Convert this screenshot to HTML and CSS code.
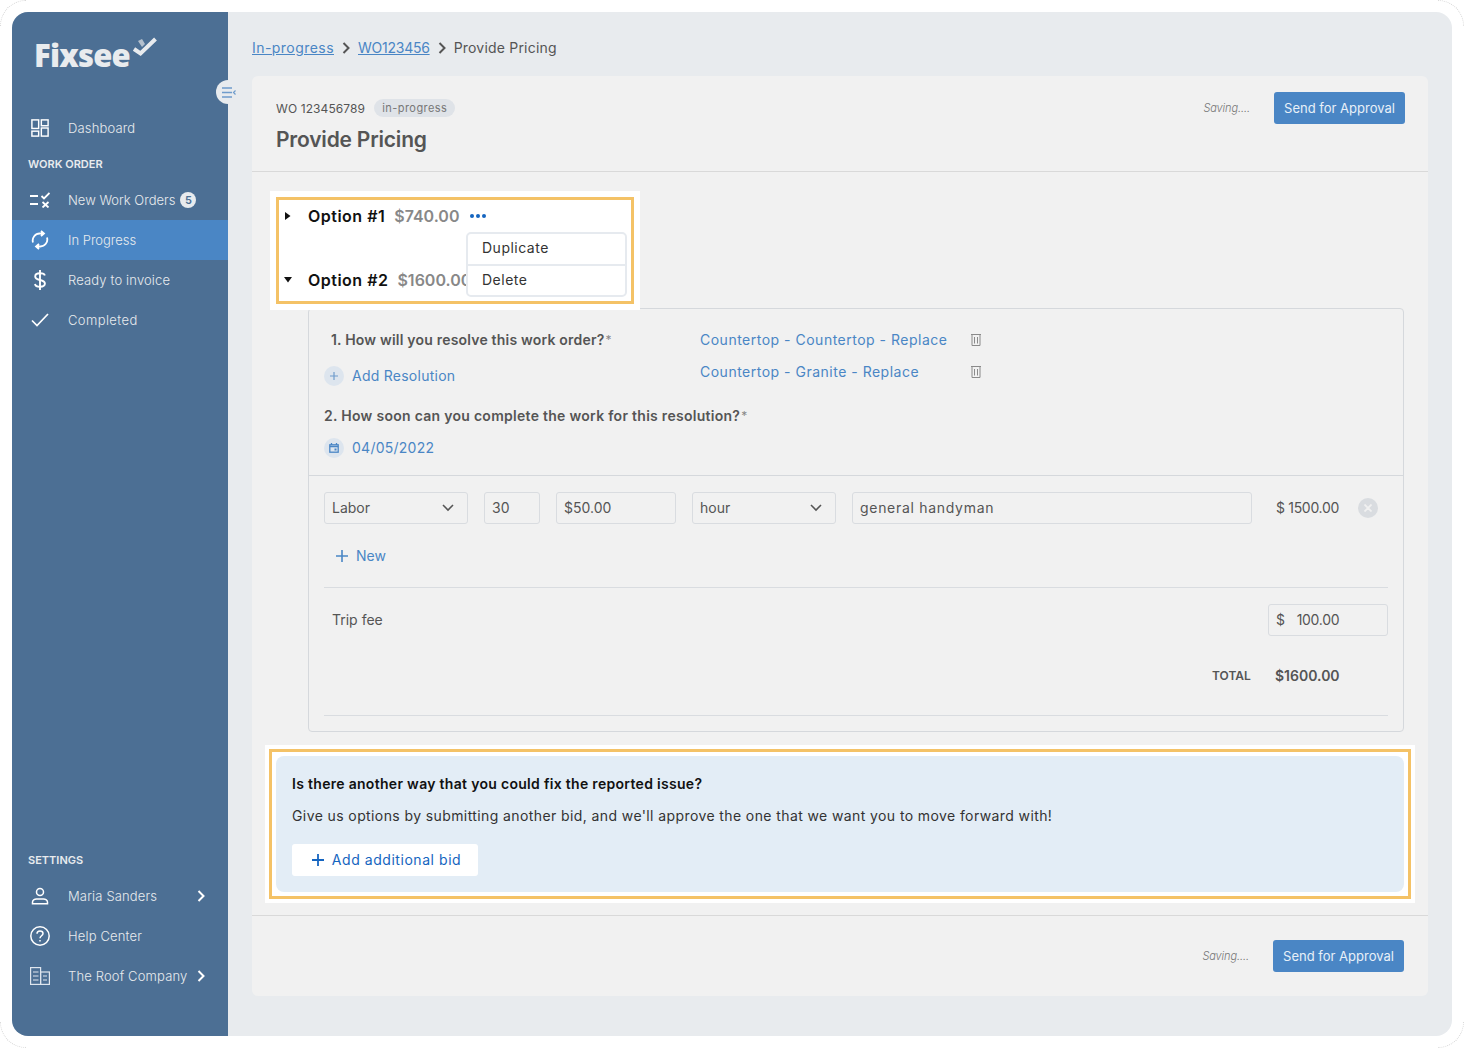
FILE: index.html
```html
<!DOCTYPE html>
<html lang="en">
<head>
    <meta charset="UTF-8">
    <link rel="stylesheet" href="styles.css">
    <title>Provide Pricing</title>
</head>
<body>
    <span class="corner corner-tl"></span>
    <span class="corner corner-tr"></span>
    <span class="corner corner-bl"></span>
    <span class="corner corner-br"></span>

    <div class="app">
        <aside class="sidebar">
            <div class="logo">
                <span class="logo-text">Fixsee</span>
                <svg class="logo-check" width="26" height="22" viewBox="0 0 26 22" fill="none"><path d="M6 5l4-2 3 5-3 3z" fill="#b4c0cd"/><path d="M2 13l6.500 4.500L23.500 3" stroke="#e8ebee" stroke-width="4"/></svg>
            </div>
            <button class="collapse">
                <svg width="14" height="11" viewBox="0 0 14 11" fill="none" stroke="#6f9ccc" stroke-width="1.700"><path d="M0 1h10M0 5.500h10M0 10h10"/><path d="M13.500 3.500l-2 2 2 2" stroke-width="1.200"/></svg>
            </button>

            <a class="nav-item">
                <span class="nav-icon"><svg width="18" height="18" viewBox="0 0 20 20" fill="none" stroke="#fff" stroke-width="1.600"><rect x="1" y="1" width="7.500" height="9.500"/><rect x="11.500" y="1" width="7.500" height="6.500"/><rect x="1" y="13.500" width="7.500" height="5.500"/><rect x="11.500" y="10" width="7.500" height="9"/></svg></span>
                <span>Dashboard</span>
            </a>
            <h4 class="nav-heading">WORK ORDER</h4>
            <a class="nav-item">
                <span class="nav-icon"><svg width="20" height="16" viewBox="0 0 20 16" fill="none" stroke="#fff" stroke-width="1.800"><path d="M0 4h8M0 12h8"/><path d="M11.500 4l2.500 2.500L19.500 1"/><path d="M12.500 10l6 5.500M18.500 10l-6 5.500"/></svg></span>
                <span class="tight">New Work Orders</span><span class="count">5</span>
            </a>
            <a class="nav-item active">
                <span class="nav-icon"><svg width="18" height="20" viewBox="0 0 18 20" fill="none" stroke="#fff" stroke-width="1.800"><path d="M2 12.500A7 7 0 0 1 9 3.500h3"/><path d="M10 .8L13 3.500 10 6.200" fill="#fff"/><path d="M16 7.500A7 7 0 0 1 9 16.500H6"/><path d="M8 13.800L5 16.500 8 19.200" fill="#fff"/></svg></span>
                <span class="tight">In Progress</span>
            </a>
            <a class="nav-item">
                <span class="nav-icon"><svg width="12" height="20" viewBox="0 0 12 20" fill="none" stroke="#fff" stroke-width="1.900"><path d="M6 0v20"/><path d="M10.800 5.500C10.500 4 9 3.300 6 3.300S1.200 4.600 1.200 6.500 3 9.300 6 10s4.900 1.600 4.900 3.600S9 16.800 6 16.800 1.300 15.800 1 14"/></svg></span>
                <span>Ready to invoice</span>
            </a>
            <a class="nav-item">
                <span class="nav-icon"><svg width="18" height="14" viewBox="0 0 18 14" fill="none" stroke="#fff" stroke-width="1.700"><path d="M1 7.500L6 12.500 17 1"/></svg></span>
                <span class="wide">Completed</span>
            </a>

            <h4 class="nav-heading settings">SETTINGS</h4>
            <a class="nav-item">
                <span class="nav-icon"><svg width="18" height="18" viewBox="0 0 18 18" fill="none" stroke="#fff" stroke-width="1.500"><circle cx="9" cy="5" r="3.500"/><path d="M1.500 16.800v-1.500c0-2 2-3.300 4-3.300h7c2 0 4 1.300 4 3.300v1.500z"/></svg></span>
                <span class="grow">Maria Sanders</span>
                <svg class="chev" width="8" height="12" viewBox="0 0 8 12" fill="none" stroke="#fff" stroke-width="2"><path d="M1.500 1l5 5-5 5"/></svg>
            </a>
            <a class="nav-item">
                <span class="nav-icon"><svg width="20" height="20" viewBox="0 0 20 20" fill="none" stroke="#fff" stroke-width="1.500"><circle cx="10" cy="10" r="9.200"/><path d="M7 7.800C7 6 8.300 5 10 5s3 1 3 2.500c0 2.300-3 2.300-3 4.800"/><path d="M10 14v1.600"/></svg></span>
                <span>Help Center</span>
            </a>
            <a class="nav-item">
                <span class="nav-icon"><svg width="20" height="18" viewBox="0 0 20 18" fill="none" stroke="#dfe6ee" stroke-width="1.200"><rect x=".6" y=".6" width="10" height="16.800"/><rect x="10.600" y="5" width="8.800" height="12.400"/><path d="M3 5h5.500M3 9h5.500M3 13h5.500M13 9h4M13 13h4"/></svg></span>
                <span class="grow">The Roof Company</span>
                <svg class="chev" width="8" height="12" viewBox="0 0 8 12" fill="none" stroke="#fff" stroke-width="2"><path d="M1.500 1l5 5-5 5"/></svg>
            </a>
        </aside>

        <main class="main">
            <nav class="crumbs">
                <a class="crumb-first">In-progress</a>
                <svg width="8" height="12" viewBox="0 0 8 12" fill="none" stroke="#555" stroke-width="2"><path d="M1.500 1l5 5-5 5"/></svg>
                <a class="crumb-wo">WO123456</a>
                <svg width="8" height="12" viewBox="0 0 8 12" fill="none" stroke="#555" stroke-width="2"><path d="M1.500 1l5 5-5 5"/></svg>
                <span class="crumb-last">Provide Pricing</span>
            </nav>

            <section class="card">
                <header class="card-head">
                    <div>
                        <div class="wo-line"><span>WO 123456789</span><span class="pill">in-progress</span></div>
                        <h1>Provide Pricing</h1>
                    </div>
                    <div class="actions">
                        <em>Saving....</em>
                        <button class="btn-primary">Send for Approval</button>
                    </div>
                </header>

                <div class="card-body">
                    <div class="options-frame">
                        <div class="options">
                            <div class="option">
                                <svg class="caret" width="6" height="8" viewBox="0 0 6 8"><path d="M0 0l5.500 4L0 8z"/></svg>
                                <strong>Option #1</strong>
                                <b>$740.00</b>
                                <span class="dots"><i></i><i></i><i></i></span>
                            </div>
                            <div class="option two">
                                <svg class="caret" width="8" height="6" viewBox="0 0 8 6"><path d="M0 0h8L4 5.500z"/></svg>
                                <strong>Option #2</strong>
                                <b>$1600.00</b>
                            </div>
                            <ul class="menu">
                                <li>Duplicate</li>
                                <li>Delete</li>
                            </ul>
                        </div>
                    </div>

                    <div class="bid">
                        <div class="resolve">
                            <div class="resolve-left">
                                <h3 class="q-first">1. How will you resolve this work order?<sup>*</sup></h3>
                                <a class="add-link">
                                    <span class="round-icon"><svg width="8" height="8" viewBox="0 0 8 8" stroke="#6f9ccc" stroke-width="1.200"><path d="M4 0v8M0 4h8"/></svg></span>
                                    Add Resolution
                                </a>
                            </div>
                            <ul class="resolutions">
                                <li><a>Countertop - Countertop - Replace</a>
                                    <svg width="10" height="12" viewBox="0 0 10 12" fill="none" stroke="#8a8a8a"><path d="M0 .5h10M1 .5v11h8V.5M3.500 3v6.500M6.500 3v6.500"/></svg></li>
                                <li><a>Countertop - Granite - Replace</a>
                                    <svg width="10" height="12" viewBox="0 0 10 12" fill="none" stroke="#8a8a8a"><path d="M0 .5h10M1 .5v11h8V.5M3.500 3v6.500M6.500 3v6.500"/></svg></li>
                            </ul>
                        </div>
                        <h3 class="q-second">2. How soon can you complete the work for this resolution?<sup>*</sup></h3>
                        <a class="add-link date">
                            <span class="round-icon"><svg width="10" height="10" viewBox="0 0 10 10" fill="none" stroke="#4a86c5" stroke-width="1.300"><rect x=".8" y="1.800" width="8.400" height="7.400"/><path d="M.8 3.500h8.400M2.500 0v2M7.500 0v2"/><path d="M5.500 5.500h2v2h-2z" fill="#4a86c5" stroke="none"/></svg></span>
                            04/05/2022
                        </a>

                        <div class="lines">
                            <div class="line-row">
                                <div class="field w-labor">Labor<svg width="12" height="8" viewBox="0 0 12 8" fill="none" stroke="#555" stroke-width="1.600"><path d="M1 1l5 5 5-5"/></svg></div>
                                <div class="field w-qty">30</div>
                                <div class="field w-rate">$50.00</div>
                                <div class="field w-labor">hour<svg width="12" height="8" viewBox="0 0 12 8" fill="none" stroke="#555" stroke-width="1.600"><path d="M1 1l5 5 5-5"/></svg></div>
                                <div class="field w-desc">general handyman</div>
                                <span class="line-total">$ 1500.00</span>
                                <span class="remove"><svg width="8" height="8" viewBox="0 0 8 8" stroke="#f1f1f1" stroke-width="1.800"><path d="M.5.5l7 7M7.500.5l-7 7"/></svg></span>
                            </div>
                            <a class="new-link">
                                <svg width="12" height="12" viewBox="0 0 12 12" stroke="#4a86c5" stroke-width="1.600"><path d="M6 0v12M0 6h12"/></svg>
                                New
                            </a>
                            <div class="trip">
                                <span>Trip fee</span>
                                <div class="field w-trip"><span>$</span><span>100.00</span></div>
                            </div>
                            <div class="total"><small>TOTAL</small><b>$1600.00</b></div>
                        </div>
                    </div>

                    <div class="another-frame">
                        <div class="another">
                            <div class="another-inner">
                                <h3>Is there another way that you could fix the reported issue?</h3>
                                <p>Give us options by submitting another bid, and we'll approve the one that we want you to move forward with!</p>
                                <button class="btn-add">
                                    <svg width="12" height="12" viewBox="0 0 12 12" stroke="#1565c0" stroke-width="1.800"><path d="M6 0v12M0 6h12"/></svg>
                                    Add additional bid
                                </button>
                            </div>
                        </div>
                    </div>
                </div>

                <footer class="card-foot">
                    <em>Saving....</em>
                    <button class="btn-primary">Send for Approval</button>
                </footer>
            </section>
        </main>
    </div>
</body>
</html>
```

FILE: styles.css
```css
* {
    box-sizing: border-box;
}

html, body {
    margin: 0;
    height: 1048px;
    overflow: hidden;
}

body {
    position: relative;
    background: #fff;
    font-family: Inter, "Noto Sans", sans-serif;
    font-size: 14px;
    color: #555;
}

h1, h3, h4, p, ul {
    margin: 0;
    padding: 0;
}

ul {
    list-style: none;
}

sup {
    margin-left: 1px;
    font-size: 12px;
    font-weight: 400;
    color: #888;
    line-height: 0;
    vertical-align: 1px;
}

/* faint arcs in the window corners */
.corner {
    position: absolute;
    width: 26px;
    height: 26px;
    border: 0 dotted #d8d8d8;
}

.corner-tl { left: 0; top: 0; border-top-width: 1px; border-left-width: 1px; border-top-left-radius: 26px; }
.corner-tr { right: 0; top: 0; border-top-width: 1px; border-right-width: 1px; border-top-right-radius: 26px; }
.corner-bl { left: 0; bottom: 0; border-bottom-width: 1px; border-left-width: 1px; border-bottom-left-radius: 26px; }
.corner-br { right: 0; bottom: 0; border-bottom-width: 1px; border-right-width: 1px; border-bottom-right-radius: 26px; }

.app {
    position: relative;
    display: flex;
    width: 1440px;
    height: 1024px;
    margin: 12px;
    border-radius: 16px;
    overflow: hidden;
    background: #e8ebee;
}

/* sidebar */
.sidebar {
    position: relative;
    display: flex;
    flex-direction: column;
    width: 216px;
    flex: none;
    padding: 96px 0 40px;
    background: #4c6f94;
    color: #e8ebee;
}

.logo {
    position: absolute;
    left: 22px;
    top: 23px;
    display: flex;
    align-items: flex-start;
}

.logo-text {
    font-family: "Open Sans", sans-serif;
    font-size: 31px;
    font-weight: 800;
    line-height: 40px;
    letter-spacing: -.8px;
    color: #e8ebee;
}

.logo-check {
    margin: 1px 0 0 2px;
}

.collapse {
    position: absolute;
    right: -12px;
    top: 68px;
    z-index: 2;
    display: flex;
    align-items: center;
    justify-content: center;
    width: 24px;
    height: 24px;
    padding: 0 0 0 1px;
    border: 0;
    border-radius: 50%;
    background: #e8ebee;
}

.nav-item {
    display: flex;
    align-items: center;
    height: 40px;
    padding: 0 23px 0 16px;
    font-size: 13px;
    font-weight: 300;
    letter-spacing: .15px;
    white-space: nowrap;
}

.tight {
    letter-spacing: 0;
}

.wide {
    letter-spacing: .4px;
}

.nav-icon {
    display: flex;
    align-items: center;
    justify-content: center;
    width: 24px;
    margin-right: 16px;
    flex: none;
}

.nav-item.active {
    background: #4a86c5;
}

.nav-heading {
    height: 32px;
    padding-left: 16px;
    font-size: 11px;
    font-weight: 600;
    line-height: 32px;
}

.nav-heading.settings {
    margin-top: auto;
}

.grow {
    flex: 1;
}

.count {
    display: flex;
    align-items: center;
    justify-content: center;
    width: 16px;
    height: 16px;
    margin-left: 5px;
    border-radius: 50%;
    background: #e8ebee;
    color: #4c6f94;
    font-size: 11px;
    font-weight: 600;
}

/* main */
.main {
    flex: 1;
    padding: 0 24px;
}

.crumbs {
    display: flex;
    align-items: center;
    gap: 8px;
    height: 64px;
    padding-top: 7px;
    color: #555;
}

.crumbs a {
    color: #4a86c5;
    text-decoration: underline;
}

.crumb-first {
    letter-spacing: .45px;
}

.crumb-wo {
    letter-spacing: -.25px;
}

.crumb-last {
    letter-spacing: .2px;
}

.card {
    height: 920px;
    border-radius: 6px;
    background: #f1f1f1;
}

.card-head {
    display: flex;
    justify-content: space-between;
    height: 96px;
    padding: 16px 23px 0 24px;
    border-bottom: 1px solid #d9d9d9;
}

.wo-line {
    display: flex;
    align-items: center;
    gap: 9px;
    height: 32px;
    font-size: 12px;
    letter-spacing: .1px;
}

.pill {
    padding: 0 8px;
    border-radius: 9px;
    background: #dfe3e8;
    color: #777;
    font-size: 11px;
    line-height: 18px;
    letter-spacing: .45px;
}

h1 {
    font-size: 21px;
    font-weight: 600;
    line-height: 32px;
    letter-spacing: -.2px;
    color: #555;
}

.actions {
    display: flex;
    align-items: flex-start;
    gap: 24px;
}

em {
    color: #777;
    font-size: 11px;
    font-weight: 300;
    line-height: 32px;
    letter-spacing: -.1px;
}

.btn-primary {
    width: 131px;
    height: 32px;
    padding: 0;
    border: 0;
    border-radius: 3px;
    background: #4a86c5;
    color: #e8f0f8;
    font: 13px Inter, sans-serif;
}

.card-body {
    height: 744px;
    padding-top: 19px;
    border-bottom: 1px solid #d9d9d9;
}

/* options with the yellow highlight */
.options-frame {
    position: relative;
    z-index: 1;
    width: 370px;
    height: 119px;
    margin-left: 18px;
    padding: 6px;
    background: #fff;
}

.options {
    position: relative;
    height: 107px;
    border: 3px solid #f4c266;
    color: #111;
}

.option {
    display: flex;
    align-items: center;
    height: 32px;
    font-size: 16px;
}

.option.two {
    margin-top: 32px;
}

.option strong {
    font-weight: 600;
    letter-spacing: .5px;
}

.option b {
    margin-left: 9px;
    color: #888;
    font-weight: 600;
}

.caret {
    width: 8px;
    margin: 0 16px 0 5px;
    fill: #111;
    flex: none;
}

.dots {
    display: flex;
    gap: 2px;
    margin-left: 11px;
}

.dots i {
    width: 4px;
    height: 4px;
    border-radius: 50%;
    background: #1565c0;
}

.menu {
    position: absolute;
    left: 187px;
    top: 32px;
    width: 161px;
    border: 2px solid #e6eaef;
    border-radius: 5px;
    background: #fff;
    color: #333;
    letter-spacing: .5px;
}

.menu li {
    height: 30px;
    padding-left: 14px;
    line-height: 28px;
}

.menu li + li {
    height: 31px;
    border-top: 2px solid #e6eaef;
}

/* bid */
.bid {
    position: relative;
    width: 1096px;
    height: 424px;
    margin: -2px 0 0 56px;
    padding: 0 0 0 15px;
    border: 1px solid #d5d8dc;
    border-radius: 4px;
}

.resolve {
    display: flex;
}

.resolve-left {
    width: 376px;
}

.bid h3 {
    font-size: 14px;
    font-weight: 600;
    color: #555;
}

.q-first {
    height: 32px;
    margin: 15px 0 0 7px;
    line-height: 32px;
    letter-spacing: .2px;
}

.q-second {
    height: 32px;
    margin-top: 4px;
    line-height: 32px;
    letter-spacing: .28px;
}

.add-link {
    display: flex;
    align-items: center;
    height: 40px;
    padding-bottom: 2px;
    color: #4a86c5;
    letter-spacing: .25px;
}

.add-link.date {
    height: 32px;
}

.round-icon {
    display: flex;
    align-items: center;
    justify-content: center;
    width: 20px;
    height: 20px;
    margin: 2px 8px 0 0;
    border-radius: 50%;
    background: #dde5ee;
}

.resolutions {
    margin-top: 14px;
}

.resolutions li {
    display: flex;
    align-items: center;
    height: 32px;
    color: #4a86c5;
}

.resolutions a {
    width: 271px;
    letter-spacing: .5px;
}

.resolutions svg {
    margin-top: 1px;
}

.lines {
    margin: 11px 0 0 -15px;
    padding: 16px 15px 0;
    border-top: 1px solid #d5d8dc;
}

.line-row {
    display: flex;
    align-items: center;
    gap: 16px;
}

.field {
    display: flex;
    align-items: center;
    justify-content: space-between;
    height: 32px;
    padding: 0 8px 2px 7px;
    border: 1px solid #d9dce0;
    border-radius: 3px;
    flex: none;
}

.field svg {
    margin-top: 2px;
}

.w-labor { width: 144px; padding-right: 13px; }
.w-qty { width: 56px; }
.w-rate { width: 120px; }
.w-desc { width: 400px; letter-spacing: .7px; }
.w-trip { width: 120px; justify-content: flex-start; gap: 12px; letter-spacing: -.3px; }

.line-total {
    width: 71px;
    margin: 0 3px 1px 0;
    flex: none;
    text-align: right;
    letter-spacing: -.3px;
    white-space: nowrap;
}

.remove {
    display: flex;
    align-items: center;
    justify-content: center;
    width: 20px;
    height: 20px;
    border-radius: 50%;
    background: #d9dce0;
    flex: none;
}

.new-link {
    display: flex;
    align-items: center;
    gap: 8px;
    height: 48px;
    margin-top: 8px;
    padding: 0 0 2px 12px;
    color: #4a86c5;
}

.new-link svg {
    margin-top: 2px;
}

.trip {
    display: flex;
    align-items: center;
    justify-content: space-between;
    height: 65px;
    margin-top: 7px;
    padding-left: 8px;
    border-top: 1px solid #d9dce0;
}

.trip > span {
    margin-bottom: 2px;
}

.total {
    display: flex;
    align-items: center;
    height: 64px;
    padding: 0 0 16px 888px;
    border-bottom: 1px solid #d9dce0;
}

.total small {
    width: 63px;
    font-size: 12px;
    font-weight: 600;
}

.total b {
    font-weight: 600;
}

/* second highlight */
.another-frame {
    width: 1150px;
    height: 158px;
    margin: 13px 0 0 13px;
    padding: 4px;
    background: #fff;
}

.another {
    height: 150px;
    padding: 4px;
    border: 3px solid #f4c266;
}

.another-inner {
    height: 136px;
    padding: 12px 16px 0;
    border-radius: 8px;
    background: #e3edf6;
}

.another-inner h3 {
    height: 32px;
    font-size: 14px;
    font-weight: 600;
    line-height: 32px;
    letter-spacing: .3px;
    color: #111;
}

.another-inner p {
    height: 32px;
    line-height: 32px;
    letter-spacing: .4px;
    color: #333;
}

.btn-add {
    display: flex;
    align-items: center;
    justify-content: center;
    gap: 8px;
    width: 186px;
    height: 32px;
    margin-top: 12px;
    padding: 0 0 2px 3px;
    border: 0;
    border-radius: 3px;
    background: #fff;
    color: #1565c0;
    font: 14px Inter, sans-serif;
    letter-spacing: .55px;
}

.btn-add svg {
    margin-top: 2px;
}

.card-foot {
    display: flex;
    justify-content: flex-end;
    gap: 24px;
    padding: 24px 24px 0 0;
}
```
